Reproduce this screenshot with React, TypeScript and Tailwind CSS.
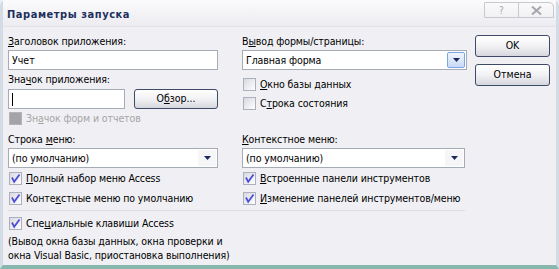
import type { ReactNode } from 'react';

const FONT = "font-['DejaVu_Sans_Condensed','DejaVu_Sans',sans-serif]";

function Label({ children, className = '' }: { children: ReactNode; className?: string }) {
  return <div className={`h-[13px] leading-[13px] text-[10.5px] tracking-[-0.1px] text-black whitespace-nowrap ${className}`}>{children}</div>;
}

function Arrow() {
  return (
    <svg width="7" height="4" viewBox="0 0 7 4">
      <path d="M0 0 H7 L3.5 4 Z" fill="#1b2a5c" />
    </svg>
  );
}

function Select({ value, width, focused = false }: { value: string; width: string; focused?: boolean }) {
  return (
    <div className={`${width} h-[20px] flex items-stretch border border-[#a5acb5] bg-white`}>
      <div className="flex-1 pl-[3px] leading-[18px] text-[10.5px] tracking-[-0.1px] text-black whitespace-nowrap">{value}</div>
      {focused ? (
        <div className="w-[18px] m-[1px] flex items-center justify-center rounded-[2px] border border-[#7ea4e6] bg-gradient-to-b from-[#f0f5fd] to-[#c8daf5]">
          <Arrow />
        </div>
      ) : (
        <div className="w-[18px] m-[1px] flex items-center justify-center bg-[#f6f6f8]">
          <Arrow />
        </div>
      )}
    </div>
  );
}

function Check({ checked = false, disabled = false, children }: { checked?: boolean; disabled?: boolean; children: ReactNode }) {
  return (
    <div className="h-[13px] flex items-center">
      {disabled ? (
        <div className="ml-[1px] w-[13px] h-[13px] border border-[#b4b4b8] bg-[#a4a4a8]" />
      ) : (
        <div className="ml-[1px] w-[13px] h-[13px] border border-[#aab0bd] bg-gradient-to-br from-[#d8d8e0] to-white flex items-center justify-center">
          {checked && (
            <svg width="11" height="11" viewBox="0 0 11 11">
              <path d="M2 4.5 L4.2 8.8 L9.5 1.5" fill="none" stroke="#4e4ed6" strokeWidth="1.8" />
            </svg>
          )}
        </div>
      )}
      <span className={`ml-[4px] text-[10.5px] tracking-[-0.1px] leading-[13px] whitespace-nowrap ${disabled ? 'text-[#a6a6a6]' : 'text-black'}`}>{children}</span>
    </div>
  );
}

function Button({ children, className = '' }: { children: ReactNode; className?: string }) {
  return (
    <div className={`h-[22px] rounded-[3px] border border-[#3e4a68] bg-gradient-to-b from-white via-[#f2f2f5] to-[#d6d6de] flex items-center justify-center text-[10.5px] text-black ${className}`}>
      {children}
    </div>
  );
}

export default function App() {
  return (
    <div className={`w-[559px] h-[269px] overflow-hidden bg-[#f0f0f4] ${FONT}`}>
      <div className="w-full h-full flex flex-col rounded-t-[6px] border-x-[3px] border-b-[4px] border-[#d3dbe5] border-b-[#86b8ae]">
        {/* заголовок окна */}
        <div className="h-[27px] shrink-0 flex items-start justify-between bg-gradient-to-b from-[#fbfbfc] to-[#ececf1] border-b border-[#e2e2e8]">
          <div className="pl-[4px] pt-[8px] text-[11px] leading-[13px] font-bold tracking-[0.55px] text-[#1d2f5c]">Параметры запуска</div>
          <div className="mt-[2px] mr-[2px] flex h-[16px] rounded-tr-[5px] border border-[#c8c8d0]">
            <div className="w-[34px] flex items-center justify-center border-r border-[#c8c8d0] text-[10px] text-[#a8a8b0]">?</div>
            <div className="w-[34px] flex items-center justify-center">
              <svg width="11" height="9" viewBox="0 0 11 9">
                <path d="M1 0.5 L10 8.5 M10 0.5 L1 8.5" stroke="#a6a6ae" strokeWidth="2" />
              </svg>
            </div>
          </div>
        </div>

        {/* клиентская область */}
        <div className="flex pt-[8px] pl-[5px]">
          <div className="w-[459px] flex flex-col">
            <div className="flex">
              <div className="w-[210px] flex flex-col">
                <Label><u>З</u>аголовок приложения:</Label>
                <div className="mt-[2px] h-[20px] border border-[#a5acb5] bg-white pl-[3px] leading-[18px] text-[10.5px]">Учет</div>
                <Label className="mt-[3px]">Зна<u>ч</u>ок приложения:</Label>
                <div className="mt-[3px] flex h-[20px]">
                  <div className="w-[117px] border border-[#a5acb5] bg-white flex items-center pl-[3px]">
                    <div className="w-[1px] h-[13px] bg-black" />
                  </div>
                  <Button className="ml-[9px] w-[84px] !h-[20px]">О<u>б</u>зор...</Button>
                </div>
                <div className="mt-[3px]">
                  <Check disabled>Зн<u>а</u>чок форм и отчетов</Check>
                </div>
              </div>
              <div className="ml-[24px] w-[225px] flex flex-col">
                <Label>В<u>ы</u>вод формы/страницы:</Label>
                <div className="mt-[2px]">
                  <Select value="Главная форма" width="w-[225px]" focused />
                </div>
                <div className="mt-[8px]">
                  <Check><u>О</u>кно базы данных</Check>
                </div>
                <div className="mt-[6px]">
                  <Check>С<u>т</u>рока состояния</Check>
                </div>
              </div>
            </div>

            <div className="flex mt-[8px]">
              <div className="w-[210px] flex flex-col">
                <Label>Строка <u>м</u>еню:</Label>
                <div className="mt-[2px]">
                  <Select value="(по умолчанию)" width="w-[210px]" />
                </div>
                <div className="mt-[4px]">
                  <Check checked><u>П</u>олный набор меню Access</Check>
                </div>
                <div className="mt-[7px]">
                  <Check checked>Конте<u>к</u>стные меню по умолчанию</Check>
                </div>
              </div>
              <div className="ml-[24px] w-[225px] flex flex-col">
                <Label><u>К</u>онтекстное меню:</Label>
                <div className="mt-[2px]">
                  <Select value="(по умолчанию)" width="w-[223px]" />
                </div>
                <div className="mt-[4px]">
                  <Check checked><u>В</u>строенные панели инструментов</Check>
                </div>
                <div className="mt-[7px]">
                  <Check checked><u>И</u>зменение панелей инструментов/меню</Check>
                </div>
              </div>
            </div>

            <div className="mt-[5px] h-[1px] w-[457px] bg-[#dcdce2]" />

            <div className="mt-[6px]">
              <Check checked>Спе<u>ц</u>иальные клавиши Access</Check>
            </div>
            <div className="mt-[4px] text-[10.5px] tracking-[-0.1px] leading-[14px] text-black">
              (Вывод окна базы данных, окна проверки и
              <br />
              окна Visual Basic, приостановка выполнения)
            </div>
          </div>

          <div className="ml-[8px] w-[75px] flex flex-col">
            <Button>OK</Button>
            <Button className="mt-[7px]">Отмена</Button>
          </div>
        </div>
      </div>
    </div>
  );
}
